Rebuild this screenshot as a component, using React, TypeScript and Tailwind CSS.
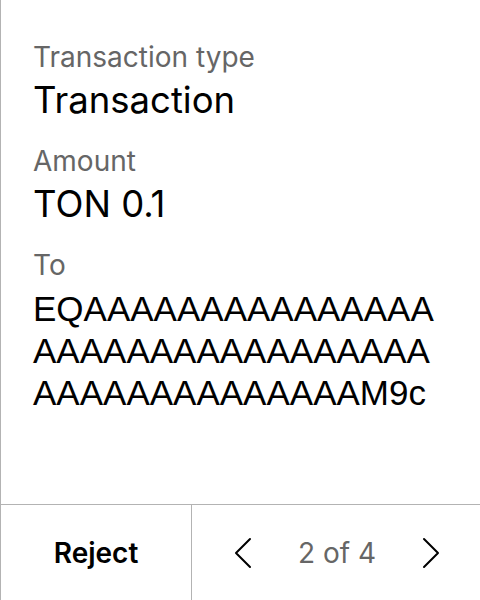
import React from 'react';

const fields = [
    {label: 'Transaction type', value: 'Transaction'},
    {label: 'Amount', value: 'TON 0.1'},
];

const address = 'EQAAAAAAAAAAAAAAAAAAAAAAAAAAAAAAAAAAAAAAAAAAAAAAM9c';

const Chevron = ({dir}: { dir: 'left' | 'right' }) => (
    <svg width="18" height="32" viewBox="0 0 18 32" fill="none" stroke="#000" strokeWidth="2" strokeLinecap="round" strokeLinejoin="round">
        {dir === 'left' ? <path d="M16 2 L2 16 L16 30"/> : <path d="M2 2 L16 16 L2 30"/>}
    </svg>
);

const App = () => {
    return (
        <div className="w-[480px] h-[600px] flex flex-col bg-white border-l border-[#b3b3b3] font-['Inter',sans-serif] text-black">
            <div className="flex-1 pl-[32px] pr-[20px] pt-[40px]">
                {fields.map((f) => (
                    <div key={f.label} className="mb-[22px]">
                        <div className="text-[28px] leading-[34px] text-[#666666]">{f.label}</div>
                        <div className="mt-[4px] text-[36.5px] leading-[44px]">{f.value}</div>
                    </div>
                ))}
                <div>
                    <div className="text-[28px] leading-[34px] text-[#666666]">To</div>
                    <div className="mt-[6px] w-[410px] font-['Liberation_Sans',Arial,sans-serif] text-[35px] leading-[42px] break-all">{address}</div>
                </div>
            </div>
            <div className="h-[96px] flex border-t border-[#b3b3b3]">
                <button className="w-[191px] border-r border-[#b3b3b3] text-[28px] font-semibold">Reject</button>
                <div className="flex-1 flex items-center pl-[42px]">
                    <Chevron dir="left"/>
                    <span className="ml-[46px] text-[28px] text-[#666666]">2 of 4</span>
                    <span className="ml-[46px]"><Chevron dir="right"/></span>
                </div>
            </div>
        </div>
    );
};

export default App;
